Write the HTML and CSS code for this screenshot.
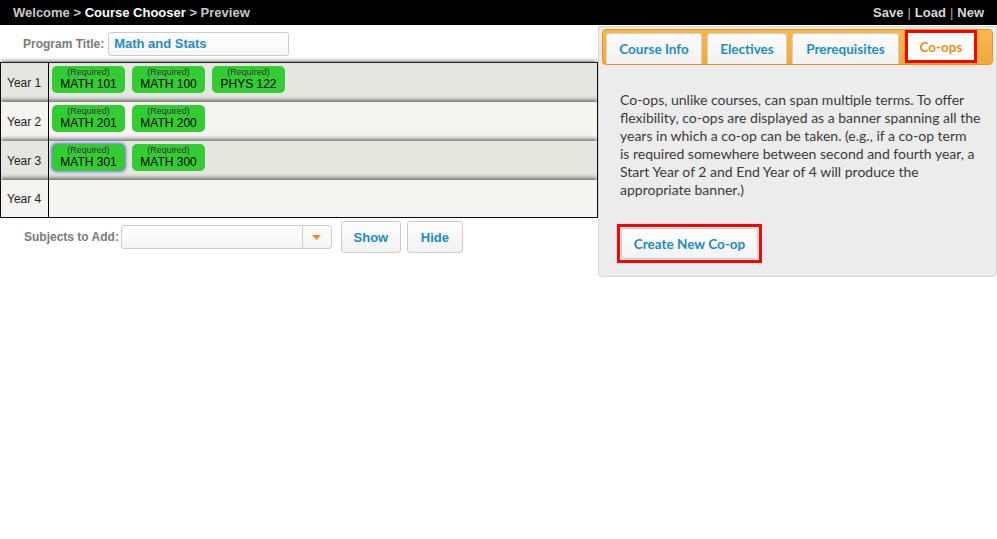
FILE: index.html
```html
<!DOCTYPE html>
<html>
<head>
<meta charset="utf-8">
<link rel="stylesheet" href="styles.css">
</head>
<body>
<div class="topbar">
  <div class="crumbs"><span class="dim">Welcome &gt; </span><span class="cur">Course Chooser</span><span class="dim"> &gt; Preview</span></div>
  <div class="actions"><span>Save</span><span class="sep">|</span><span>Load</span><span class="sep">|</span><span>New</span></div>
</div>
<div class="main">
  <div class="left">
    <div class="title-row">
      <span class="lbl">Program Title:</span>
      <div class="title-input">Math and Stats</div>
    </div>
    <div class="grid">
      <div class="row odd">
        <div class="year">Year 1</div>
        <div class="cells">
          <div class="chip"><span class="req">(Required)</span><span class="code">MATH 101</span></div>
          <div class="chip"><span class="req">(Required)</span><span class="code">MATH 100</span></div>
          <div class="chip"><span class="req">(Required)</span><span class="code">PHYS 122</span></div>
        </div>
      </div>
      <div class="row even">
        <div class="year">Year 2</div>
        <div class="cells">
          <div class="chip"><span class="req">(Required)</span><span class="code">MATH 201</span></div>
          <div class="chip"><span class="req">(Required)</span><span class="code">MATH 200</span></div>
        </div>
      </div>
      <div class="row odd">
        <div class="year">Year 3</div>
        <div class="cells">
          <div class="chip focus"><span class="req">(Required)</span><span class="code">MATH 301</span></div>
          <div class="chip"><span class="req">(Required)</span><span class="code">MATH 300</span></div>
        </div>
      </div>
      <div class="row even last">
        <div class="year">Year 4</div>
        <div class="cells"></div>
      </div>
    </div>
    <div class="add-row">
      <span class="lbl">Subjects to Add:</span>
      <div class="select"><div class="sel-val"></div><div class="sel-arrow"><svg width="9" height="5" viewBox="0 0 9 5"><path d="M0 0H9L4.5 5Z" fill="#e8901c"/></svg></div></div>
      <button class="btn btn-show">Show</button>
      <button class="btn btn-hide">Hide</button>
    </div>
  </div>
  <div class="panel">
    <div class="tabs">
      <div class="tab t-info">Course Info</div>
      <div class="tab t-elec">Electives</div>
      <div class="tab t-pre">Prerequisites</div>
      <div class="tab t-coop active">Co-ops</div>
    </div>
    <p class="desc">Co-ops, unlike courses, can span multiple terms. To offer<br>flexibility, co-ops are displayed as a banner spanning all the<br>years in which a co-op can be taken. (e.g., if a co-op term<br>is required somewhere between second and fourth year, a<br>Start Year of 2 and End Year of 4 will produce the<br>appropriate banner.)</p>
    <div class="hl"><button class="btn btn-create">Create New Co-op</button></div>
  </div>
</div>
</body>
</html>
```
FILE: styles.css
```css
* { box-sizing: border-box; }
html, body { margin: 0; padding: 0; background: #fff; }
body { font-family: "Liberation Sans", Arial, sans-serif; width: 997px; height: 539px; overflow: hidden; }

.topbar {
  height: 25px;
  background: #000;
  display: flex;
  justify-content: space-between;
  align-items: center;
  padding: 0 13px 1px 13px;
  font-weight: bold;
  font-size: 13px;
}
.crumbs .dim { color: #c8c8c8; }
.crumbs .cur { color: #fff; }
.actions { color: #d8d8d8; display: flex; gap: 4px; }
.actions .sep { color: #aaa; font-weight: normal; }

.main { display: flex; align-items: flex-start; }
.left { width: 598px; flex: none; }

.title-row {
  display: flex;
  align-items: center;
  padding: 7px 0 0 23px;
  gap: 4px;
}
.lbl { font-size: 12px; font-weight: bold; color: #7a7a7a; }
.title-input {
  width: 181px;
  height: 24px;
  border: 1px solid #ccc;
  border-radius: 3px;
  background: linear-gradient(#fff, #f6f6f6);
  color: #1f8cc2;
  font-weight: bold;
  font-size: 13px;
  line-height: 22px;
  padding-left: 5px;
}

.grid {
  margin-top: 6px;
  width: 598px;
  border: 1px solid #111;
  border-top: 1px solid #333;
}
.row {
  display: flex;
  height: 39px;
  box-shadow: 0 -2px 4px rgba(0, 0, 0, 0.55);
}
.row.last { height: 37px; }
.row.odd { background: #e6e6e0; }
.row.even { background: #f4f4f0; }
.year {
  width: 48px;
  flex: none;
  border-right: 1px solid #000;
  font-size: 12px;
  color: #222;
  display: flex;
  align-items: center;
  padding-left: 6px;
}
.cells {
  display: flex;
  gap: 7px;
  padding: 3px 0 0 3px;
}
.chip {
  width: 73px;
  height: 27px;
  background: #33cc33;
  border-radius: 5px;
  display: flex;
  flex-direction: column;
  align-items: center;
  padding-top: 1px;
}
.chip.focus { box-shadow: 0 0 3px 1px #7070f0; }
.req { font-size: 9px; line-height: 10px; color: #333; }
.code { font-size: 12px; line-height: 14px; color: #000; }

.add-row {
  display: flex;
  align-items: center;
  padding: 3px 0 0 24px;
}
.add-row .lbl { margin-right: 2px; }
.select {
  width: 211px;
  height: 24px;
  border: 1px solid #ccc;
  border-radius: 3px;
  background: linear-gradient(#fff, #f3f3f3);
  display: flex;
  margin-right: 9px;
}
.sel-val { flex: 1; }
.sel-arrow {
  width: 29px;
  border-left: 1px solid #ccc;
  display: flex;
  align-items: center;
  justify-content: center;
  padding-top: 1px;
}
.btn {
  font-family: "Liberation Sans", Arial, sans-serif;
  font-weight: bold;
  font-size: 13px;
  color: #2289c3;
  border: 1px solid #ccc;
  border-radius: 3px;
  background: linear-gradient(#fdfdfd, #f2f2f2);
  padding: 0;
  cursor: pointer;
}
.btn-show { width: 60px; height: 32px; margin-right: 6px; }
.btn-hide { width: 56px; height: 32px; }

.panel {
  flex: 1;
  margin-top: 1px;
  height: 251px;
  background: #ececec;
  border: 1px solid #d6d6d6;
  border-radius: 0 0 4px 4px;
  padding: 2px 3px 0 3px;
}
.tabs {
  height: 36px;
  border: 1px solid #e8941f;
  border-radius: 4px;
  background: linear-gradient(#f8b84c, #f4a93a);
  display: flex;
  align-items: flex-end;
  gap: 5px;
  padding-left: 3px;
}
.tab {
  height: 31px;
  border: 1px solid #cfcfcf;
  border-bottom: none;
  border-radius: 3px 3px 0 0;
  background: linear-gradient(#fbfbfb, #f2f2f2);
  font-family: "Lato", sans-serif;
  font-weight: bold;
  font-size: 13.5px;
  color: #1f8cc2;
  display: flex;
  align-items: center;
  justify-content: center;
}
.t-info { width: 96px; }
.t-elec { width: 80px; }
.t-pre { width: 107px; margin-right: 1px; }
.tab.active {
  width: 72px;
  height: 33px;
  margin-bottom: 1px;
  border: 3px solid #ff0000;
  background: #fff;
  color: #ef8d12;
  border-radius: 0;
}
.desc {
  margin: 26px 0 0 18px;
  width: 372px;
  white-space: nowrap;
  font-family: "Lato", sans-serif;
  font-size: 14px;
  line-height: 18px;
  color: #3a3a3a;
}
.hl {
  display: inline-block;
  margin: 25px 0 0 15px;
  border: 3px solid #ff0000;
  padding: 1px;
}
.btn-create {
  display: block;
  width: 137px;
  height: 31px;
  font-family: "Lato", sans-serif;
  font-size: 13.5px;
  background: linear-gradient(#fdfdfd, #f3f3f3);
}
```
